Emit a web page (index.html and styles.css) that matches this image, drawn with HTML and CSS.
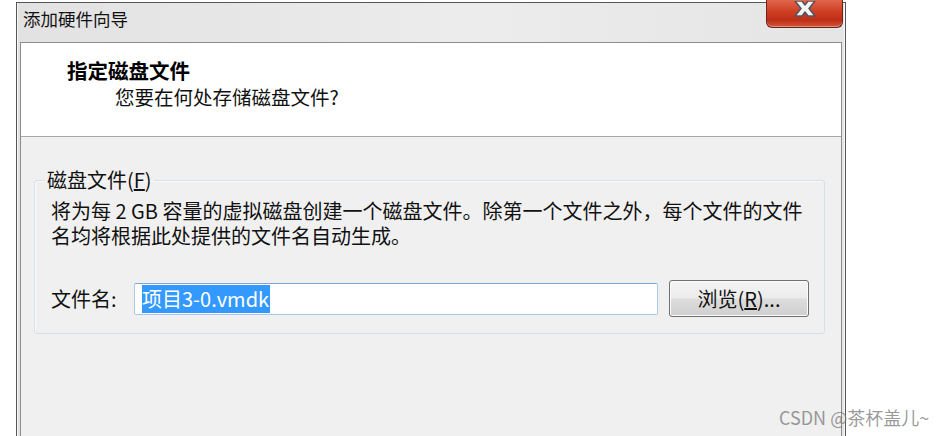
FILE: index.html
```html
<!DOCTYPE html>
<html lang="zh-CN">
<head>
  <meta charset="UTF-8" />
  <title>添加硬件向导</title>
  <link rel="stylesheet" href="styles.css">
</head>
<body>

  <div class="window">
    <div class="titlebar">添加硬件向导</div>

    <button class="close-btn" title="关闭">
      <svg width="28" height="20" viewBox="0 0 28 20">
        <path d="M4 0 L11 0 L14 4 L17 0 L24 0 L18 7.5 L24 15 L17 15 L14 11 L11 15 L4 15 L10 7.5 Z"
              fill="#f4f4f4" stroke="#4f5560" stroke-width="1.5" stroke-linejoin="round"/>
      </svg>
    </button>

    <div class="content">
      <div class="header">
        <h1>指定磁盘文件</h1>
        <p>您要在何处存储磁盘文件?</p>
      </div>

      <fieldset class="groupbox">
        <legend>磁盘文件(<u>F</u>)</legend>
        <p class="desc">将为每 2 GB 容量的虚拟磁盘创建一个磁盘文件。除第一个文件之外，每个文件的文件<br>名均将根据此处提供的文件名自动生成。</p>

        <div class="file-row">
          <label>文件名:</label>
          <div class="textbox"><span class="selected">项目3-0.vmdk</span></div>
          <button class="browse-btn">浏览(<u>R</u>)...</button>
        </div>
      </fieldset>
    </div>
  </div>

  <div class="watermark">CSDN @茶杯盖儿~</div>

</body>
</html>
```

FILE: styles.css
```css
* {
  margin: 0;
  padding: 0;
  box-sizing: border-box;
}

body {
  font-family: "Noto Sans CJK SC", "Noto Sans", sans-serif;
  background: #fff;
  color: #000;
  width: 951px;
  height: 436px;
  overflow: hidden;
  position: relative;
}

.window {
  position: relative;
  margin: 2px 0 0 16px;
  width: 830px;
  height: 480px;
  border: 1px solid #555;
  border-bottom: none;
  padding: 0 3px;
  background: linear-gradient(to right, #e2e2e2, #ececec 55%, #e5e5e5);
  box-shadow: inset 1px 0 0 #f8f8f8, inset -1px 0 0 #f8f8f8;
}

.titlebar {
  height: 39px;
  padding: 3px 0 0 3px;
  font-size: 17.5px;
  line-height: 26px;
  color: #111;
}

.close-btn {
  position: absolute;
  top: -4px;
  right: 2px;
  width: 77px;
  height: 29px;
  border: 1px solid #6a2519;
  border-top: none;
  border-radius: 0 0 6px 6px;
  background: linear-gradient(#e26a50, #cf3f24 45%, #bd2e17 75%, #d4563a);
  box-shadow: inset 0 -1px 0 rgba(255, 255, 255, 0.35);
  display: flex;
  justify-content: center;
  align-items: flex-start;
  padding-top: 2px;
}

.content {
  height: 460px;
  border: 1px solid #8c8c8c;
  border-bottom: none;
  background: #f0f0f0;
}

.header {
  background: #fff;
  height: 94px;
  border-bottom: 1px solid #a8a8a8;
  padding: 15px 0 0 46px;
}

.header h1 {
  font-size: 20.5px;
  font-weight: bold;
  line-height: 25px;
}

.header p {
  font-size: 19.5px;
  line-height: 26px;
  margin: 1px 0 0 48px;
  color: #111;
}

.groupbox {
  margin: 31px 16px 0 13px;
  border: 1px solid #d5dfe5;
  border-radius: 3px;
  padding: 6px 14px 16px 16px;
  box-shadow: inset 1px 1px 0 #fafafa;
}

.groupbox legend {
  font-size: 20px;
  line-height: 24px;
  padding: 0 2px;
  margin-left: -6px;
  color: #111;
}

.desc {
  font-size: 20px;
  line-height: 25px;
  color: #111;
  white-space: nowrap;
}

.file-row {
  display: flex;
  align-items: center;
  margin-top: 32px;
}

.file-row label {
  font-size: 20px;
  width: 83px;
  color: #111;
}

.textbox {
  width: 524px;
  height: 32px;
  background: #fff;
  border: 1px solid #a9c8e6;
  border-top-color: #7ea6cf;
  border-radius: 2px;
  padding: 1px 0 0 7px;
  font-size: 20px;
  line-height: 28px;
}

.selected {
  background: #3399ff;
  color: #fff;
  display: inline-block;
  padding-right: 1px;
}

.browse-btn {
  margin-left: 11px;
  width: 140px;
  height: 37px;
  border: 1px solid #707070;
  border-radius: 3px;
  background: linear-gradient(#f4f4f4, #ececec 48%, #dddddd 52%, #cfcfcf);
  box-shadow: inset 0 0 0 1px #fcfcfc;
  font-family: inherit;
  font-size: 20px;
  color: #111;
}

.watermark {
  position: absolute;
  left: 779px;
  top: 404px;
  font-size: 18px;
  color: rgba(120, 120, 120, 0.75);
  font-family: "Noto Sans CJK SC", "Liberation Sans", sans-serif;
}
```
